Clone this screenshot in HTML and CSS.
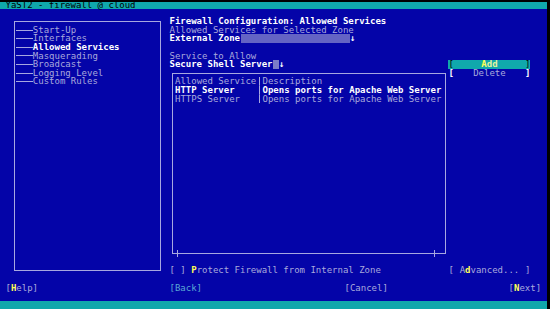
FILE: index.html
```html
<!DOCTYPE html>
<html lang="en">
<head>
    <meta charset="UTF-8">
    <meta name="viewport" content="width=device-width, initial-scale=1.0">
    <title>YaST2 - firewall @ cloud</title>
    <link rel="stylesheet" href="styles.css">
</head>
<body>
    <div class="screen">
        <div class="titlebar">YaST2 - firewall @ cloud</div>

        <!-- left tree -->
        <div class="panel tree-box">
            <ul class="tree">
                <li><span class="branch"></span>Start-Up</li>
                <li><span class="branch"></span>Interfaces</li>
                <li class="current"><span class="branch"></span>Allowed Services</li>
                <li><span class="branch"></span>Masquerading</li>
                <li><span class="branch"></span>Broadcast</li>
                <li><span class="branch"></span>Logging Level</li>
                <li><span class="branch"></span>Custom Rules</li>
            </ul>
        </div>

        <!-- right side -->
        <div class="txt bright heading">Firewall Configuration: Allowed Services</div>
        <div class="txt subheading">Allowed Services for Selected Zone</div>
        <div class="txt bright zone-label">External Zone</div>
        <div class="zone-field"></div>
        <div class="txt bright zone-arrow">↓</div>

        <div class="txt service-label">Service to Allow</div>
        <div class="txt bright service-value">Secure Shell Server</div>
        <div class="service-cursor"></div>
        <div class="txt bright service-arrow">↓</div>

        <div class="btn btn-add active"><span>[</span><span class="label"><span class="hot">A</span>dd</span><span>]</span></div>
        <div class="btn btn-delete"><span class="bright">[</span><span class="label">Delete</span><span class="bright">]</span></div>

        <div class="panel list-box">
            <div class="list">
                <div class="cell">Allowed Service</div><div class="sep"></div><div class="cell">Description</div>
                <div class="cell bright">HTTP Server</div><div class="sep"></div><div class="cell bright">Opens ports for Apache Web Server</div>
                <div class="cell">HTTPS Server</div><div class="sep"></div><div class="cell">Opens ports for Apache Web Server</div>
            </div>
        </div>
        <div class="tick tick-left"></div>
        <div class="tick tick-right"></div>

        <div class="txt protect">[ ] <span class="hot">P</span>rotect Firewall from Internal Zone</div>
        <div class="btn btn-advanced"><span>[</span><span class="label">A<span class="hot">d</span>vanced...</span><span>]</span></div>

        <div class="txt nav-help">[<span class="hot">H</span>elp]</div>
        <div class="txt nav-back">[Back]</div>
        <div class="txt nav-cancel">[Cancel]</div>
        <div class="txt nav-next">[<span class="hot">N</span>ext]</div>

        <div class="statusbar"></div>
    </div>
</body>
</html>
```

FILE: styles.css
```css
body {
    margin: 0;
    padding: 0;
    background-color: #000;
    font-family: 'DejaVu Sans Mono', 'Liberation Mono', monospace;
    font-size: 9px;
    line-height: 8.6px;
}
/* 100 x 36 character cells */
.screen {
    display: grid;
    grid-template-columns: repeat(100, 5.47px);
    grid-template-rows: repeat(36, 8.6px);
    width: 547px;
    background-color: #0404a8;
    color: #aaaadc;
}
.txt {
    white-space: pre;
    min-width: 0;
}
.bright {
    color: #fff;
    font-weight: bold;
}
.hot {
    color: #ffff54;
    font-weight: bold;
}
.titlebar {
    grid-row: 1;
    grid-column: 1 / -1;
    background-color: #10a8ac;
    border-top: 2px solid #000;
    color: #000;
    padding-left: 5.47px;
    line-height: 6.6px;
    white-space: pre;
}
.statusbar {
    grid-row: 36;
    grid-column: 1 / -1;
    background-color: #10a8ac;
}
/* frames sit on the middle of the cells */
.panel {
    margin: 4.3px 2.735px;
    border: 1px solid #a8a8e0;
}
.tree-box {
    grid-row: 3 / 33;
    grid-column: 3 / 31;
}
.tree {
    list-style: none;
    margin: 0;
    padding: 3.3px 0 0 1.735px;
}
.tree li {
    display: flex;
    align-items: center;
    height: 8.6px;
    white-space: pre;
}
.tree li.current {
    color: #fff;
    font-weight: bold;
}
.branch {
    display: inline-block;
    width: 16.41px;
    height: 1px;
    background-color: #a8a8e0;
}
.heading { grid-row: 3; grid-column: 32 / 80; }
.subheading { grid-row: 4; grid-column: 32 / 80; }
.zone-label { grid-row: 5; grid-column: 32 / 45; }
.zone-field {
    grid-row: 5;
    grid-column: 45 / 65;
    background-color: #6464c4;
}
.zone-arrow { grid-row: 5; grid-column: 65; }
.service-label { grid-row: 7; grid-column: 32 / 60; }
.service-value { grid-row: 8; grid-column: 32 / 51; }
.service-cursor {
    grid-row: 8;
    grid-column: 51;
    background-color: #7c7cc8;
}
.service-arrow { grid-row: 8; grid-column: 52; }
.btn {
    display: flex;
    justify-content: space-between;
    white-space: pre;
}
.btn .label {
    flex: 1;
    text-align: center;
}
.btn.active {
    background-color: #10a8ac;
    color: #000;
}
.btn.active .label {
    color: #e4f4a0;
    font-weight: bold;
}
.btn-add { grid-row: 8; grid-column: 83 / 98; }
.btn-delete { grid-row: 9; grid-column: 83 / 98; }
.btn-advanced { grid-row: 32; grid-column: 83 / 98; }
.list-box {
    grid-row: 9 / 31;
    grid-column: 32 / 83;
}
.list {
    display: grid;
    grid-template-columns: 82.05px 5.47px 1fr;
    grid-auto-rows: 8.6px;
    padding: 3.3px 0 0 1.735px;
    white-space: pre;
}
.sep {
    background: linear-gradient(#a8a8e0, #a8a8e0) center / 1px 100% no-repeat;
}
.tick {
    width: 1px;
    height: 7px;
    justify-self: center;
    align-self: center;
    background-color: #a8a8e0;
}
.tick-left { grid-row: 30; grid-column: 33; }
.tick-right { grid-row: 30; grid-column: 80; }
.protect { grid-row: 32; grid-column: 32 / 75; }
.nav-help { grid-row: 34; grid-column: 2 / 8; }
.nav-back { grid-row: 34; grid-column: 32 / 38; color: #5aa8d4; }
.nav-cancel { grid-row: 34; grid-column: 64 / 72; }
.nav-next { grid-row: 34; grid-column: 94 / 100; }
```
